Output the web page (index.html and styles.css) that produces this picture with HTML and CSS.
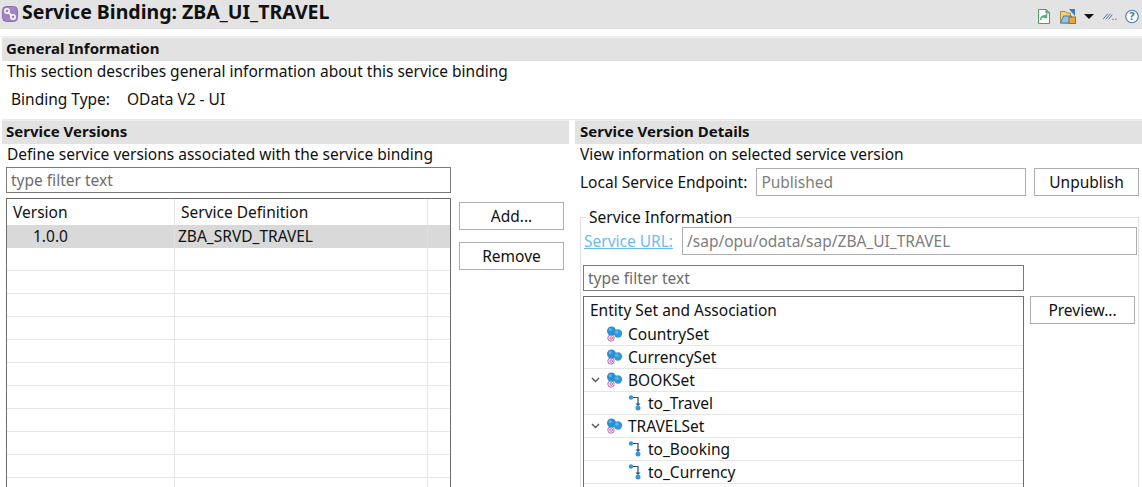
FILE: index.html
```html
<!DOCTYPE html>
<html lang="en">
<head>
    <meta charset="UTF-8">
    <title>Service Binding: ZBA_UI_TRAVEL</title>
    <link rel="stylesheet" href="styles.css">
</head>
<body>
    <svg class="defs" width="0" height="0">
        <symbol id="entity" viewBox="0 0 18 18">
            <circle cx="5" cy="13" r="3.200" fill="#fff" stroke="#c060b0" stroke-width="1"/>
            <circle cx="5.200" cy="13" r="1.300" fill="none" stroke="#c060b0" stroke-width="1"/>
            <circle cx="5.500" cy="6" r="4.500" fill="#2b8fd0"/>
            <circle cx="12" cy="8.500" r="4.200" fill="#2f9ad8"/>
            <circle cx="4.300" cy="4.600" r="1.600" fill="#5fb2e6"/>
            <circle cx="10.800" cy="7.200" r="1.600" fill="#5fb2e6"/>
        </symbol>
        <symbol id="assoc" viewBox="0 0 14 16">
            <path d="M4 2.500H11V10" fill="none" stroke="#24506f" stroke-width="1.200"/>
            <circle cx="4" cy="2.500" r="2.200" fill="#3a96d4"/>
            <path d="M8.500 8.500h5L11 11z" fill="#24506f"/>
            <circle cx="11" cy="13" r="2.500" fill="#3a96d4"/>
        </symbol>
        <symbol id="chevron" viewBox="0 0 9 6">
            <path d="M1 1l3.500 3.500L8 1" fill="none" stroke="#555" stroke-width="1.400"/>
        </symbol>
    </svg>

    <!-- Title bar -->
    <header class="title-bar">
        <svg class="title-icon" width="16" height="16" viewBox="0 0 16 16">
            <rect x="0.500" y="0.500" width="15" height="15" rx="4" fill="#a184c6" stroke="#8a6cb0"/>
            <path d="M6 6l4 4" fill="none" stroke="#fff" stroke-width="1.600"/>
            <circle cx="5" cy="5" r="2.200" fill="#a184c6" stroke="#fff" stroke-width="1.500"/>
            <circle cx="11" cy="11" r="2.200" fill="#a184c6" stroke="#fff" stroke-width="1.500"/>
        </svg>
        <h1>Service Binding: ZBA_UI_TRAVEL</h1>
        <div class="toolbar">
            <svg width="12" height="15" viewBox="0 0 12 15">
                <path d="M.5 .5H8L11.500 4V14.500H.5z" fill="#fff" stroke="#4c9a6a"/>
                <path d="M8 .5V4h3.500z" fill="#8ac4a0" stroke="#4c9a6a"/>
                <path d="M2.500 11c.5-3 3-4.500 6-4M8.500 5v3.500H5.500" fill="none" stroke="#55b07a" stroke-width="1.500"/>
            </svg>
            <svg class="tool-folder" width="16" height="15" viewBox="0 0 16 15">
                <path d="M.5 2.500h5l1 1.500h4V14H.5z" fill="#f3d27c" stroke="#b58a35"/>
                <path d="M.5 14l3-7h8l-3 7z" fill="#8fc4ea" stroke="#3f7fb5"/>
                <path d="M9 0h6v7z" fill="#2f7fc0"/>
                <rect x="9" y="8" width="6.500" height="6.500" fill="#e5a838" stroke="#a86f10"/>
            </svg>
            <svg width="10" height="5" viewBox="0 0 10 5"><path d="M0 0h10L5 5z" fill="#111"/></svg>
            <svg class="tool-minimize" width="14" height="7" viewBox="0 0 15 7">
                <path d="M0 6.500l5-6M3 6.500l5-6M6 6.500l4-5" stroke="#3f6c9c" fill="none"/>
                <path d="M10 6.500h1.500M13 6.500h1.500" stroke="#3f6c9c"/>
            </svg>
            <svg width="14" height="15" viewBox="0 0 15 15">
                <circle cx="7.500" cy="7.500" r="6.700" fill="#fff" stroke="#4a7fb0" stroke-width="1.300"/>
                <text x="7.500" y="11.500" class="help-mark">?</text>
            </svg>
        </div>
    </header>
    <div class="title-rule"></div>

    <!-- General information -->
    <section class="general">
        <h2 class="section-head">General Information</h2>
        <p class="desc">This section describes general information about this service binding</p>
        <div class="binding-type"><span>Binding Type:</span><span>OData V2 - UI</span></div>
    </section>

    <main class="columns">
        <!-- Service versions -->
        <section class="col-left">
            <h2 class="section-head">Service Versions</h2>
            <p class="desc">Define service versions associated with the service binding</p>
            <div class="left-body">
                <div class="left-main">
                    <div class="filter">type filter text</div>
                    <div class="table">
                        <div class="row row-head"><div>Version</div><div class="c2">Service Definition</div><div></div></div>
                        <div class="row selected"><div class="version">1.0.0</div><div class="c2 tight">ZBA_SRVD_TRAVEL</div><div></div></div>
                        <div class="row"><div></div><div></div><div></div></div>
                        <div class="row"><div></div><div></div><div></div></div>
                        <div class="row"><div></div><div></div><div></div></div>
                        <div class="row"><div></div><div></div><div></div></div>
                        <div class="row"><div></div><div></div><div></div></div>
                        <div class="row"><div></div><div></div><div></div></div>
                        <div class="row"><div></div><div></div><div></div></div>
                        <div class="row"><div></div><div></div><div></div></div>
                        <div class="row"><div></div><div></div><div></div></div>
                        <div class="row"><div></div><div></div><div></div></div>
                        <div class="row"><div></div><div></div><div></div></div>
                    </div>
                </div>
                <div class="side-buttons">
                    <button>Add...</button>
                    <button>Remove</button>
                </div>
            </div>
        </section>

        <!-- Service version details -->
        <section class="col-right">
            <h2 class="section-head">Service Version Details</h2>
            <p class="desc">View information on selected service version</p>
            <div class="endpoint">
                <span class="endpoint-label">Local Service Endpoint:</span>
                <div class="field grow">Published</div>
                <button>Unpublish</button>
            </div>
            <div class="group">
                <div class="legend">Service Information</div>
                <div class="url-row">
                    <a class="link">Service URL:</a>
                    <div class="field grow">/sap/opu/odata/sap/ZBA_UI_TRAVEL</div>
                </div>
                <div class="tree-area">
                    <div class="tree-main">
                        <div class="filter">type filter text</div>
                        <div class="tree">
                            <div class="tree-head">Entity Set and Association</div>
                            <div class="node"><svg class="ico"><use href="#entity"/></svg>CountrySet</div>
                            <div class="node"><svg class="ico"><use href="#entity"/></svg>CurrencySet</div>
                            <div class="node"><svg class="chev"><use href="#chevron"/></svg><svg class="ico"><use href="#entity"/></svg>BOOKSet</div>
                            <div class="node child"><svg class="ico-a"><use href="#assoc"/></svg>to_Travel</div>
                            <div class="node"><svg class="chev"><use href="#chevron"/></svg><svg class="ico"><use href="#entity"/></svg>TRAVELSet</div>
                            <div class="node child"><svg class="ico-a"><use href="#assoc"/></svg>to_Booking</div>
                            <div class="node child"><svg class="ico-a"><use href="#assoc"/></svg>to_Currency</div>
                        </div>
                    </div>
                    <button class="preview">Preview...</button>
                </div>
            </div>
        </section>
    </main>
</body>
</html>
```

FILE: styles.css
```css
* {
    box-sizing: border-box;
}

html, body {
    height: 487px;
    overflow: hidden;
}

body {
    margin: 0;
    background: #fff;
    color: #111;
    font-family: "Noto Sans", "Open Sans", sans-serif;
    font-size: 15.5px;
}

.defs {
    display: block;
    height: 0;
}

p, h1, h2 {
    margin: 0;
}

.title-bar {
    height: 29px;
    background: #e3e3e3;
    display: flex;
    align-items: center;
    padding-left: 2px;
}

.title-bar h1 {
    align-self: flex-start;
    font-size: 19.5px;
    font-weight: 700;
    margin-left: 4px;
    line-height: 23px;
}

.title-icon {
    margin-top: -1px;
}

.toolbar {
    margin-left: auto;
    margin-right: 3px;
    margin-top: 3px;
    display: flex;
    align-items: center;
    gap: 8px;
}

.tool-folder {
    margin-left: 2px;
}

.tool-minimize {
    margin-left: 1px;
}

.help-mark {
    font-size: 12px;
    font-weight: 700;
    fill: #3f6c9c;
    text-anchor: middle;
}

.title-rule {
    height: 8px;
    border-top: 2px solid #fff;
    border-bottom: 1px solid #efefef;
    background: #fff;
}

.section-head {
    height: 24px;
    line-height: 21px;
    background: #e2e2e2;
    font-size: 15px;
    font-weight: 700;
    padding-left: 4px;
    border-top: 1px solid #eee;
}

.desc {
    height: 22px;
    line-height: 20px;
    padding-left: 5px;
}

.general {
    margin-left: 2px;
    height: 83px;
    border-bottom: 1px solid #e8e8e8;
}

.binding-type {
    display: flex;
    gap: 17px;
    padding: 5px 0 0 9px;
    line-height: 22px;
}

.columns {
    display: flex;
    margin-left: 2px;
    gap: 6px;
}

.col-left {
    width: 567px;
}

.col-right {
    flex: 1;
}

.col-right .section-head {
    padding-left: 5px;
}

.left-body {
    display: flex;
    padding: 1px 0 0 4px;
}

.left-main {
    width: 445px;
}

.filter {
    height: 26px;
    line-height: 24px;
    border: 1px solid #7a7a7a;
    color: #6d6d6d;
    padding-left: 4px;
}

.table {
    margin-top: 5px;
    height: 289px;
    border: 1px solid #6e6e6e;
    border-bottom: 0;
    overflow: hidden;
}

.row {
    height: 23px;
    display: grid;
    grid-template-columns: 167px 253px 1fr;
    border-bottom: 1px solid #e6e6e6;
    line-height: 22px;
}

.row > div + div {
    border-left: 1px solid #e6e6e6;
}

.row-head {
    height: 26px;
    line-height: 27px;
    border-bottom: 0;
}

.row-head > div:first-child {
    padding-left: 6px;
}

.c2 {
    padding-left: 6px;
}

.c2.tight {
    padding-left: 3px;
}

.selected {
    background: #d9d9d9;
    border-bottom: 0;
}

.selected > div + div {
    border-left-color: #e0e0e0;
}

.version {
    padding-left: 26px;
}

.side-buttons {
    margin-left: 8px;
    padding-top: 35px;
    display: flex;
    flex-direction: column;
    gap: 12px;
}

button {
    width: 105px;
    height: 28px;
    background: #fff;
    border: 1px solid #adadad;
    font: inherit;
    color: #111;
    padding: 0;
}

.endpoint {
    display: flex;
    align-items: center;
    height: 28px;
    margin-top: 2px;
    padding-left: 5px;
    gap: 8px;
}

.endpoint-label {
    margin-right: 1px;
}

.endpoint button {
    margin-right: 3px;
}

.field {
    height: 28px;
    line-height: 26px;
    border: 1px solid #adadad;
    color: #7d7d7d;
    padding-left: 4px;
}

.grow {
    flex: 1;
}

.group {
    position: relative;
    margin: 21px 3px 0 5px;
    height: 270px;
    border: 1px solid #e0e0e0;
    border-bottom: 0;
    padding: 9px 1px 0 3px;
}

.legend {
    position: absolute;
    left: 5px;
    top: -11px;
    padding: 0 3px;
    background: #fff;
    line-height: 20px;
}

.url-row {
    display: flex;
    align-items: center;
    gap: 9px;
}

.link {
    color: #6cbcf0;
    text-decoration: underline;
}

.tree-area {
    display: flex;
    margin-top: 10px;
    margin-left: -1px;
    gap: 6px;
}

.tree-main {
    width: 441px;
}

.tree {
    margin-top: 5px;
    height: 191px;
    border: 1px solid #6e6e6e;
    border-bottom: 0;
    overflow: hidden;
}

.tree-head {
    height: 26px;
    line-height: 27px;
    padding-left: 6px;
}

.node {
    height: 23px;
    line-height: 22px;
    border-bottom: 1px solid #e6e6e6;
    display: flex;
    align-items: center;
    padding-left: 22px;
}

.node.child {
    padding-left: 43px;
}

.ico {
    width: 18px;
    height: 18px;
    margin-right: 4px;
}

.ico-a {
    width: 14px;
    height: 16px;
    margin-right: 7px;
}

.chev {
    width: 9px;
    height: 6px;
    margin-left: -15px;
    margin-right: 6px;
}

.preview {
    margin-top: 31px;
}
```
